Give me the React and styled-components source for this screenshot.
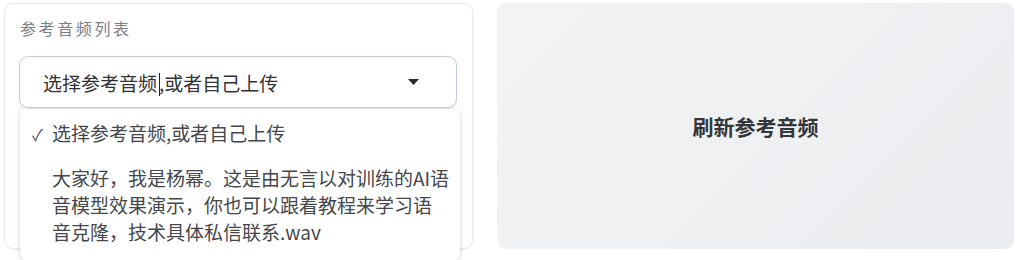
import React from "react";
import styled, { createGlobalStyle } from "styled-components";

const Global = createGlobalStyle`
  html, body { margin: 0; padding: 0; background: #ffffff; }
  body { font-family: "Noto Sans CJK SC", "Noto Sans", sans-serif; }
  * { box-sizing: border-box; }
`;

const Page = styled.div`
  display: flex;
  gap: 24px;
  padding: 3px 3px 0 4px;
  width: 1017px;
  height: 260px;
  overflow: hidden;
`;

const Panel = styled.div`
  position: relative;
  width: 469px;
  height: 246px;
  flex: none;
  background: #ffffff;
  border: 1px solid #e6e8eb;
  border-radius: 9px;
  box-shadow: 0 1px 2px rgba(0, 0, 0, 0.05);
  padding: 14px 15px 0 14px;
`;

const Label = styled.div`
  font-size: 16px;
  line-height: 20px;
  letter-spacing: 2.6px;
  color: #7b7e83;
  padding-left: 1px;
`;

const SelectWrap = styled.div`
  position: relative;
  margin-top: 18px;
`;

const SelectBox = styled.div`
  display: flex;
  align-items: center;
  height: 52px;
  width: 438px;
  padding: 0 36px 0 23px;
  border: 1px solid #c3ccd8;
  border-radius: 9px;
  background: #ffffff;
  box-shadow: 0 1px 2px rgba(80, 100, 130, 0.12);
  font-size: 19px;
  color: #303236;
`;

const Value = styled.span`
  flex: 1;
  white-space: nowrap;
`;

const Caret = styled.span`
  display: inline-block;
  width: 0;
  height: 23px;
  border-left: 1.5px solid #222;
  vertical-align: -5px;
  margin: 0 -1px 0 2px;
`;

const Arrow = styled.svg`
  width: 11px;
  height: 6px;
  flex: none;
  margin-right: 1px;
`;

const Menu = styled.ul`
  position: absolute;
  top: 53px;
  left: 1px;
  width: 440px;
  margin: 0;
  padding: 2px 0 8px;
  list-style: none;
  background: #ffffff;
  border-radius: 0 0 9px 9px;
  box-shadow: 0 2px 6px rgba(0, 0, 0, 0.12), 0 0 0 1px rgba(0, 0, 0, 0.03);
  font-size: 19px;
  line-height: 27px;
  color: #45474b;
  z-index: 2;
`;

const Option = styled.li`
  padding: 8px 4px 8px ${(p) => (p.$selected ? "12px" : "32px")};
  white-space: nowrap;
`;

const Check = styled.span`
  display: inline-block;
  width: 20px;
  font-size: 16px;
  color: #55585c;
`;

const RefreshButton = styled.button`
  flex: 1;
  height: 246px;
  border: none;
  border-radius: 9px;
  background: linear-gradient(135deg, #f1f3f5 0%, #eef0f2 55%, #eaecef 100%);
  font-family: "Noto Sans CJK SC", "Noto Sans", sans-serif;
  font-size: 21px;
  font-weight: 700;
  color: #34363a;
  display: flex;
  align-items: center;
  justify-content: center;
  padding: 0;
  cursor: pointer;
`;

export default function App() {
  return (
    <>
      <Global />
      <Page>
        <Panel>
          <Label>参考音频列表</Label>
          <SelectWrap>
            <SelectBox>
              <Value>
                选择参考音频<Caret />,或者自己上传
              </Value>
              <Arrow viewBox="0 0 11 6">
                <path d="M0 0 H11 L5.5 6 Z" fill="#2a2c30" />
              </Arrow>
            </SelectBox>
            <Menu>
              <Option $selected>
                <Check>✓</Check>选择参考音频,或者自己上传
              </Option>
              <Option>
                大家好，我是杨幂。这是由无言以对训练的AI语
                <br />
                音模型效果演示，你也可以跟着教程来学习语
                <br />
                音克隆，技术具体私信联系.wav
              </Option>
            </Menu>
          </SelectWrap>
        </Panel>
        <RefreshButton>刷新参考音频</RefreshButton>
      </Page>
    </>
  );
}
